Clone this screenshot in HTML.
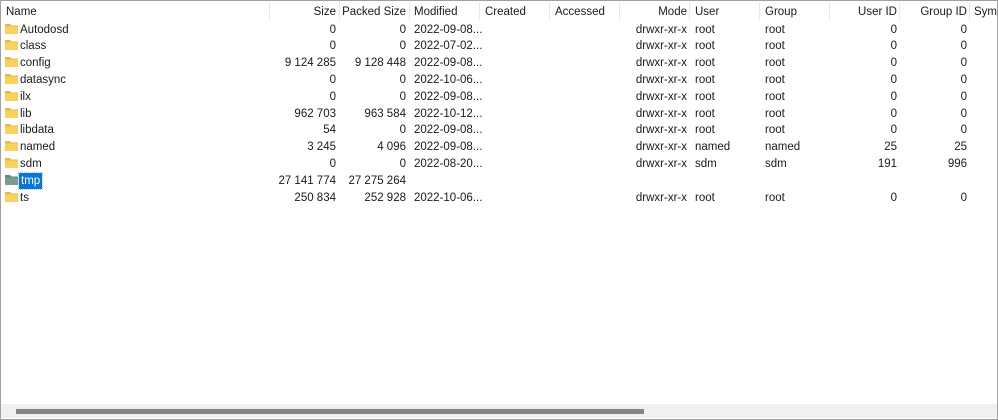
<!DOCTYPE html>
<html><head><meta charset="utf-8"><style>
html,body{margin:0;padding:0;background:#fff;}
body{width:998px;height:420px;position:relative;overflow:hidden;font-family:"Liberation Sans",sans-serif;font-size:11.5px;color:#1a1a1a;}
.frame{position:absolute;left:0;top:0;width:996px;height:418px;border:1px solid #a0a0a0;}
.t{position:absolute;white-space:nowrap;line-height:16px;}
.r{text-align:right;}
.sep{position:absolute;top:2px;height:18px;width:1px;background:#e8e8e8;}
.fold{position:absolute;left:5px;width:13px;height:10px;}
.sb{position:absolute;left:1px;top:404px;width:996px;height:14px;background:#f0f0f0;}
.thumb{position:absolute;left:16px;top:409px;width:628px;height:5px;background:#858585;}
</style></head><body>
<div class="frame"></div>
<div id="c"></div>
<div class="sb"></div><div class="thumb"></div>
<script>
var cols=[[270,'Size','r',336],[340,'Packed Size','r',406],[410,'Modified','l',414],[480,'Created','l',485],[550,'Accessed','l',555],[620,'Mode','r',687],[690,'User','l',695],[760,'Group','l',765],[830,'User ID','r',897],[900,'Group ID','r',967],[970,'Sym','l',974]];
var h='';
h+='<div class="t" style="left:6px;top:4px">Name</div>';
cols.forEach(function(c){h+='<div class="sep" style="left:'+(c[0]-1)+'px"></div>';
 if(c[2]=='r')h+='<div class="t r" style="right:'+(998-c[3])+'px;top:4px">'+c[1]+'</div>';
 else h+='<div class="t" style="left:'+c[3]+'px;top:4px">'+c[1]+'</div>';});
var rows=[['Autodosd','0','0','2022-09-08...','drwxr-xr-x','root','root','0','0'],
['class','0','0','2022-07-02...','drwxr-xr-x','root','root','0','0'],
['config','9 124 285','9 128 448','2022-09-08...','drwxr-xr-x','root','root','0','0'],
['datasync','0','0','2022-10-06...','drwxr-xr-x','root','root','0','0'],
['ilx','0','0','2022-09-08...','drwxr-xr-x','root','root','0','0'],
['lib','962 703','963 584','2022-10-12...','drwxr-xr-x','root','root','0','0'],
['libdata','54','0','2022-09-08...','drwxr-xr-x','root','root','0','0'],
['named','3 245','4 096','2022-09-08...','drwxr-xr-x','named','named','25','25'],
['sdm','0','0','2022-08-20...','drwxr-xr-x','sdm','sdm','191','996'],
['tmp','27 141 774','27 275 264','','','','','',''],
['ts','250 834','252 928','2022-10-06...','drwxr-xr-x','root','root','0','0']];
rows.forEach(function(r,i){var y=21+i*16.8;var sel=r[0]=='tmp';
 h+='<svg class="fold" style="top:'+(y+2.5)+'px" viewBox="0 0 13 10"><path d="M0 0h5l1.5 1.5H13V10H0z" fill="'+(sel?'#5f8a7a':'#e8b84a')+'"/><rect x="0" y="2.5" width="13" height="7.5" fill="'+(sel?'#7a9e8e':'#f8d25c')+'"/></svg>';
 if(sel)h+='<div class="t" style="left:19px;top:'+(y+.5)+'px;background:#0a74d8;color:#fff;padding:0 2px;outline:1px dotted #9fc8f0;">tmp</div>';
 else h+='<div class="t" style="left:20px;top:'+(y+.5)+'px">'+r[0]+'</div>';
 var v=[[336,r[1],'r'],[406,r[2],'r'],[414,r[3],'l'],[687,r[4],'r'],[695,r[5],'l'],[765,r[6],'l'],[897,r[7],'r'],[967,r[8],'r']];
 v.forEach(function(c){if(!c[1])return;
  if(c[2]=='r')h+='<div class="t r" style="right:'+(998-c[0])+'px;top:'+(y+.5)+'px">'+c[1]+'</div>';
  else h+='<div class="t" style="left:'+c[0]+'px;top:'+(y+.5)+'px">'+c[1]+'</div>';});
});
document.getElementById('c').innerHTML=h;
</script>
</body></html>
